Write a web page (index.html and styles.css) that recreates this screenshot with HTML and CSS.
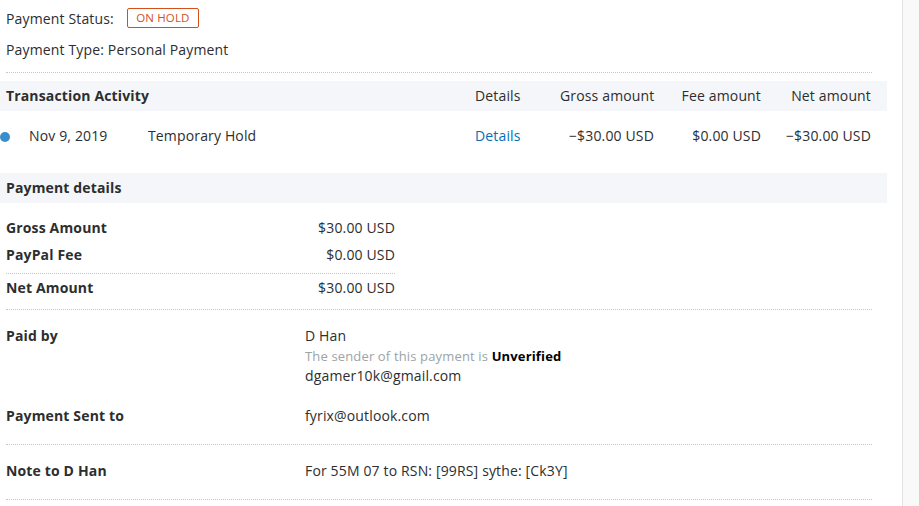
FILE: index.html
```html
<!DOCTYPE html>
<html lang="en">
<head>
    <meta charset="UTF-8">
    <meta name="viewport" content="width=device-width, initial-scale=1.0">
    <title>Transaction Details</title>
    <link rel="stylesheet" href="styles.css">
</head>
<body>
    <div class="page">
        <div class="main">
            <div class="summary">
                <div class="status-row">
                    <span>Payment Status:</span>
                    <span class="badge">ON HOLD</span>
                </div>
                <div class="type-row">Payment Type: Personal Payment</div>
            </div>

            <div class="activity">
                <div class="bar activity-grid">
                    <div class="bar-title">Transaction Activity</div>
                    <div>Details</div>
                    <div class="num">Gross amount</div>
                    <div class="num">Fee amount</div>
                    <div class="num">Net amount</div>
                </div>
                <div class="activity-grid activity-row">
                    <div><span class="dot"></span></div>
                    <div>Nov 9, 2019</div>
                    <div>Temporary Hold</div>
                    <div><a href="#" class="link">Details</a></div>
                    <div class="num">&minus;$30.00 USD</div>
                    <div class="num">$0.00 USD</div>
                    <div class="num">&minus;$30.00 USD</div>
                </div>
            </div>

            <div class="bar bar-title details-bar">Payment details</div>

            <div class="amounts">
                <div class="amount-row">
                    <span class="label">Gross Amount</span>
                    <span>$30.00 USD</span>
                </div>
                <div class="amount-row fee">
                    <span class="label">PayPal Fee</span>
                    <span>$0.00 USD</span>
                </div>
                <div class="amount-row net">
                    <span class="label">Net Amount</span>
                    <span>$30.00 USD</span>
                </div>
            </div>

            <div class="section">
                <div class="info-row">
                    <div class="label">Paid by</div>
                    <div>
                        <div>D Han</div>
                        <div class="muted">The sender of this payment is <b>Unverified</b></div>
                        <div>dgamer10k@gmail.com</div>
                    </div>
                </div>
                <div class="info-row">
                    <div class="label">Payment Sent to</div>
                    <div>fyrix@outlook.com</div>
                </div>
            </div>

            <div class="section">
                <div class="info-row">
                    <div class="label">Note to D Han</div>
                    <div>For 55M 07 to RSN: [99RS] sythe: [Ck3Y]</div>
                </div>
            </div>
        </div>
        <div class="side"></div>
    </div>
</body>
</html>
```

FILE: styles.css
```css
body {
    margin: 0;
    font-family: "Open Sans", Arial, sans-serif;
    font-size: 14px;
    letter-spacing: 0.15px;
    color: #2c2e2f;
    background-color: #fff;
}
.page {
    display: flex;
    min-height: 506px;
}
.main {
    width: 902px;
    flex-shrink: 0;
}
.side {
    flex: 1;
    background-color: #f9f9f9;
    border-left: 1px solid #e3e3e3;
}
.summary {
    margin: 0 30px 0 6px;
    padding-bottom: 8px;
    border-bottom: 1px dotted #c4c7c9;
}
.status-row {
    height: 36px;
    display: flex;
    align-items: center;
    gap: 13px;
}
.badge {
    display: inline-block;
    width: 70px;
    height: 18px;
    line-height: 18px;
    text-align: center;
    border: 1px solid #d3501b;
    border-radius: 2px;
    color: #d3501b;
    font-size: 11.5px;
}
.type-row {
    height: 28px;
    line-height: 28px;
}
.bar {
    background-color: #f5f6f9;
    height: 30px;
    line-height: 30px;
    margin-right: 15px;
}
.bar-title {
    font-weight: bold;
    padding-left: 6px;
}
.activity {
    margin-top: 8px;
}
.activity-grid {
    display: grid;
    grid-template-columns: 29px 119px 327px 85px 94px 107px 110px;
    white-space: nowrap;
}
.activity-grid .bar-title {
    grid-column: 1 / 4;
}
.num {
    text-align: right;
}
.activity-row {
    padding: 14px 0;
    line-height: 22px;
}
.dot {
    display: inline-block;
    width: 10px;
    height: 10px;
    border-radius: 50%;
    background-color: #3a8dcb;
    vertical-align: -1px;
}
.link {
    color: #0070ba;
    text-decoration: none;
}
.details-bar {
    margin-top: 12px;
}
.amounts {
    margin: 11px 30px 0 6px;
    padding-bottom: 7px;
    border-bottom: 1px dotted #c4c7c9;
}
.amount-row {
    width: 389px;
    display: flex;
    justify-content: space-between;
    height: 27px;
    line-height: 27px;
}
.amount-row.fee {
    height: 32px;
    border-bottom: 1px dotted #c4c7c9;
}
.amount-row.net {
    height: 28px;
    line-height: 28px;
}
.label {
    font-weight: bold;
}
.section {
    margin: 0 30px 0 6px;
    padding: 16px 0 18px;
    border-bottom: 1px dotted #c4c7c9;
    line-height: 20px;
    display: flex;
    flex-direction: column;
    gap: 20px;
}
.info-row {
    display: grid;
    grid-template-columns: 299px 1fr;
}
.muted {
    color: #9da3a6;
    font-size: 13px;
}
.muted b {
    color: #000;
}
```
